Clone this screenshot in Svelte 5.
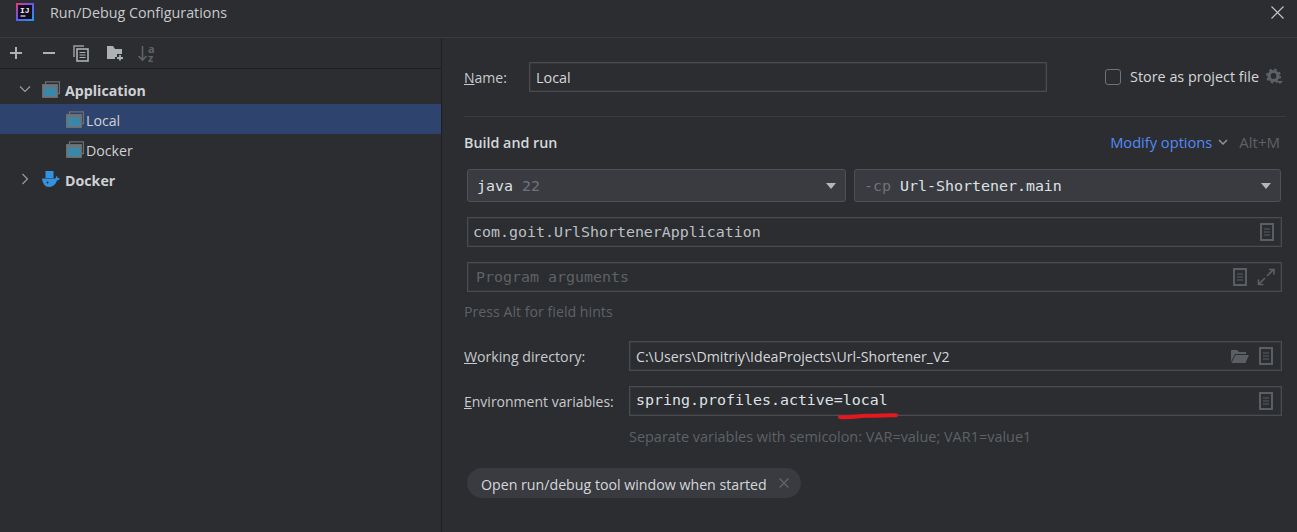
<script>
	const tree = [
		{ name: 'Application', bold: true, open: true, icon: 'app', indent: 'top' },
		{ name: 'Local', icon: 'app', indent: 'child', selected: true },
		{ name: 'Docker', icon: 'app', indent: 'child' },
		{ name: 'Docker', bold: true, open: false, icon: 'docker', indent: 'top' }
	]
</script>

{#snippet doc()}
	<svg class="ic" width="16" height="18" viewBox="0 0 16 18">
		<rect x="2" y="1" width="12" height="16" fill="none" stroke="#5a5f63" stroke-width="2" />
		<path d="M5 6h6M5 9h6M5 12h6" stroke="#5a5f63" stroke-width="1.2" />
	</svg>
{/snippet}

{#snippet appIcon()}
	<svg class="treeicon" width="18" height="17" viewBox="0 0 18 17">
		<path d="M3.500 3V.800h14V12.500H16" fill="none" stroke="#6b7074" stroke-width="1.300" />
		<rect x="1" y="4" width="14" height="12" fill="#3a87a8" stroke="#6e7478" stroke-width="1.800" />
		<rect x="1" y="4" width="14" height="2.500" fill="#6e7478" />
	</svg>
{/snippet}

<div class="dialog">
	<header class="titlebar">
		<svg class="logo" width="18" height="18" viewBox="0 0 18 18">
			<defs>
				<linearGradient id="lg" x1="0" y1="0" x2="1" y2="1">
					<stop offset="0" stop-color="#f0386b" />
					<stop offset="0.45" stop-color="#6a55f0" />
					<stop offset="1" stop-color="#1e9cf0" />
				</linearGradient>
			</defs>
			<rect width="18" height="18" fill="url(#lg)" />
			<rect x="2" y="2" width="14" height="14" fill="#120b1c" />
			<text x="4" y="10" class="ij">IJ</text>
			<path d="M4.500 13h5" stroke="#e8e8ee" stroke-width="1.200" />
		</svg>
		<span class="title">Run/Debug Configurations</span>
		<svg class="close" width="13" height="13" viewBox="0 0 13 13">
			<path d="M.500 .500l12 12M12.500 .500l-12 12" stroke="#c4c7cb" stroke-width="1.100" />
		</svg>
	</header>

	<div class="body">
		<aside class="left">
			<div class="toolbar">
				<svg class="add" width="14" height="14" viewBox="0 0 14 14"><path d="M7 1v12M1 7h12" stroke="#aeb1b4" stroke-width="2" /></svg>
				<svg class="remove" width="14" height="14" viewBox="0 0 14 14"><path d="M1 7h12" stroke="#aeb1b4" stroke-width="2" /></svg>
				<svg class="copy" width="16" height="17" viewBox="0 0 16 17">
					<path d="M11 1H1v11" fill="none" stroke="#9a9da0" stroke-width="1.500" />
					<rect x="4" y="4" width="11" height="12" fill="none" stroke="#aeb1b4" stroke-width="1.600" />
					<path d="M6.500 7.500h6M6.500 10h6M6.500 12.500h6" stroke="#aeb1b4" stroke-width="1.200" />
				</svg>
				<svg class="folder" width="19" height="16" viewBox="0 0 19 16">
					<path d="M1 1h6l2 3h7v5h-5v3H9v2H1z" fill="#aeb1b4" />
					<path d="M14 10v5.500M11 13h6" stroke="#aeb1b4" stroke-width="1.800" />
				</svg>
				<svg class="sort" width="18" height="17" viewBox="0 0 18 17">
					<path d="M5.500 1v14M1.500 11l4 4 4-4" fill="none" stroke="#5f6366" stroke-width="1.600" />
					<text x="11" y="7.500" class="az">a</text>
					<text x="11" y="16.500" class="az">z</text>
				</svg>
			</div>
			<div class="tree">
				{#each tree as row}
					<div class="row {row.indent}" class:selected={row.selected}>
						{#if row.indent === 'top'}
							<svg class="chev" width="12" height="12" viewBox="0 0 12 12">
								{#if row.open}
									<path d="M1 3.500l5 5 5-5" fill="none" stroke="#9da0a3" stroke-width="1.100" />
								{:else}
									<path d="M3.500 1l5 5-5 5" fill="none" stroke="#9da0a3" stroke-width="1.100" />
								{/if}
							</svg>
						{/if}
						{#if row.icon === 'app'}
							{@render appIcon()}
						{:else}
							<svg class="treeicon" width="18" height="16" viewBox="0 0 18 16">
								<rect x="3.500" y="0" width="8" height="7" fill="#3592e0" />
								<path d="M0 7.500h13.500q.5-2 1-2.500 1.200 .5 1.200 2 1.300-.3 2.300 .5-1 2-3 2-2 6.500-8 6.500-6 0-7-8.500z" fill="#3592e0" />
								<circle cx="5.500" cy="11.500" r="1" fill="#20252b" />
							</svg>
						{/if}
						<span class:bold={row.bold}>{row.name}</span>
					</div>
				{/each}
			</div>
		</aside>

		<main class="right">
			<div class="namerow">
				<label class="lbl name"><u>N</u>ame:</label>
				<div class="field namefield">Local</div>
				<div class="store">
					<span class="check"></span>
					<span class="storetext">Store as project file</span>
					<svg width="18" height="18" viewBox="0 0 18 18">
						<circle cx="8.500" cy="8" r="4.500" fill="none" stroke="#5e6266" stroke-width="3.200" />
						<circle cx="8.500" cy="8" r="6.500" fill="none" stroke="#5e6266" stroke-width="2" stroke-dasharray="2.500 2.600" />
						<path d="M12 13h6l-3 3z" fill="#5e6266" />
					</svg>
				</div>
			</div>

			<div class="divider"></div>

			<div class="buildhead">
				<strong>Build and run</strong>
				<span class="modify">Modify options</span>
				<svg width="10" height="7" viewBox="0 0 10 7"><path d="M1 1l4 4 4-4" fill="none" stroke="#8f9398" stroke-width="1.500" /></svg>
				<span class="shortcut">Alt+M</span>
			</div>

			<div class="combos">
				<div class="combo jdk">
					<span class="mono"><span class="kw">java</span> <span class="dim">22</span></span>
					<i class="arrow"></i>
				</div>
				<div class="combo cp">
					<span class="mono"><span class="dim">-cp</span> <span class="kw">Url-Shortener.main</span></span>
					<i class="arrow"></i>
				</div>
			</div>

			<div class="field wide mono mainclass">
				<span>com.goit.UrlShortenerApplication</span>
				<span class="icons">{@render doc()}</span>
			</div>

			<div class="field wide mono args">
				<span class="ph">Program arguments</span>
				<span class="icons">
					{@render doc()}
					<svg class="ic" width="18" height="18" viewBox="0 0 18 18">
						<path d="M10 8l6-6M12 1.500h5v5M8 10l-6 6M1.500 11.500v5h5" fill="none" stroke="#5a5f63" stroke-width="1.700" />
					</svg>
				</span>
			</div>

			<div class="hint first">Press Alt for field hints</div>

			<div class="formrow workdir">
				<label class="lbl"><u>W</u>orking directory:</label>
				<div class="field grow">
					<span>C:\Users\Dmitriy\IdeaProjects\Url-Shortener_V2</span>
					<span class="icons">
						<svg class="ic" width="19" height="15" viewBox="0 0 19 15">
							<path d="M1 13V1h6l2 2h7v2H5L1 13zM5.500 6H19l-3.500 8H1.500z" fill="#5a5f63" />
						</svg>
						{@render doc()}
					</span>
				</div>
			</div>

			<div class="formrow envvars">
				<label class="lbl"><u>E</u>nvironment variables:</label>
				<div class="field grow env">
					<span class="mono envtext">spring.profiles.active=local</span>
					<span class="icons">{@render doc()}</span>
					<svg class="scribble" width="60" height="8" viewBox="0 0 60 8">
						<path d="M2 5C12 6 22 3.500 30 3.800S50 3 58 3.300" fill="none" stroke="#e3191f" stroke-width="4" stroke-linecap="round" />
					</svg>
				</div>
			</div>

			<div class="hint sep">Separate variables with semicolon: VAR=value; VAR1=value1</div>

			<div class="pill">
				<span>Open run/debug tool window when started</span>
				<svg width="10" height="10" viewBox="0 0 10 10"><path d="M.500 .500l9 9M9.500 .500l-9 9" stroke="#63676b" stroke-width="1.200" /></svg>
			</div>
		</main>
	</div>
</div>

<style>
	:global(body) {
		background: #2b2d30;
	}

	.dialog {
		display: flex;
		flex-direction: column;

		height: 532px;
		overflow: hidden;

		background: #2b2d30;
		color: #d5d7da;

		font-family: "Open Sans", sans-serif;
		font-size: 14px;
	}

	.titlebar {
		display: flex;
		align-items: center;
		flex: none;

		height: 38px;
		padding: 0 13px 13px 16px;
		box-sizing: border-box;

		border-bottom: 1px solid #393b40;
	}

	.logo {
		margin-right: 16px;
		overflow: visible;
	}

	.ij {
		fill: #f2f2f6;
		font-family: "Liberation Mono", monospace;
		font-size: 8px;
		font-weight: 700;
	}

	.title {
		flex: 1;
		color: #c8cacd;
		font-size: 14.300px;
	}

	.body {
		display: flex;
		flex: 1;
		min-height: 0;
	}

	.left {
		flex: none;
		width: 441px;
		border-right: 1px solid #1e1f22;
	}

	.toolbar {
		display: flex;
		align-items: center;

		height: 31px;
		padding: 0 0 0 9px;
		box-sizing: border-box;

		border-bottom: 1px solid #1e1f22;
	}

	.remove {
		margin-left: 19px;
	}

	.copy {
		margin-left: 17px;
	}

	.folder {
		margin-left: 17px;
	}

	.sort {
		margin-left: 12px;
		overflow: visible;
	}

	.az {
		fill: #5f6366;
		font-size: 11px;
		font-weight: 700;
	}

	.tree {
		padding-top: 5px;
	}

	.row {
		display: flex;
		align-items: center;
		height: 30px;
		color: #cfd1d4;
		font-size: 14.200px;
	}

	.row span {
		padding-top: 2px;
	}

	.row.selected {
		background: #2e436e;
	}

	.row.top {
		padding-left: 19px;
	}

	.row.child {
		padding-left: 66px;
	}

	.chev {
		margin-right: 11px;
	}

	.treeicon {
		margin-right: 2px;
		flex: none;
	}

	.row.top .treeicon {
		margin-right: 5px;
	}

	.bold {
		font-weight: 700;
	}

	.right {
		flex: 1;
		min-width: 0;
		padding: 24px 15px 0 22px;
		box-sizing: border-box;
	}

	.lbl {
		display: block;
		flex: none;
		color: #c8cacd;
	}

	.namerow {
		display: flex;
		align-items: center;
		height: 30px;
	}

	.lbl.name {
		width: 65px;
	}

	.field {
		display: flex;
		align-items: center;
		justify-content: space-between;

		height: 30px;
		padding: 0 6px;
		box-sizing: border-box;

		border: 1px solid #494b50;
		box-shadow: inset 0 0 0 1px #34363a;
		background: #2b2d30;
		color: #d5d7da;
	}

	.namefield {
		flex: none;
		width: 518px;
		font-size: 14.400px;
	}

	.store {
		display: flex;
		align-items: center;
		margin-left: 58px;
		white-space: nowrap;
	}

	.check {
		width: 16px;
		height: 16px;
		margin-right: 9px;
		box-sizing: border-box;
		border: 1px solid #6f7377;
		border-radius: 3px;
	}

	.storetext {
		padding-bottom: 2px;
		font-size: 14.400px;
	}

	.store svg {
		margin-left: 6px;
	}

	.divider {
		height: 1px;
		margin-top: 24px;
		margin-right: -4px;
		background: #393b40;
	}

	.buildhead {
		display: flex;
		align-items: center;
		height: 20px;
		margin-top: 15px;
		margin-right: 2px;
	}

	.buildhead strong {
		flex: 1;
		font-size: 14.300px;
		font-weight: 600;
		color: #d5d7da;
	}

	.modify {
		color: #548af7;
		font-size: 14.650px;
	}

	.buildhead svg {
		margin: 0 11px 0 6px;
	}

	.shortcut {
		color: #5e6267;
		font-size: 15px;
	}

	.combos {
		display: flex;
		gap: 8px;
		margin: 17px 0 0 3px;
	}

	.combo {
		display: flex;
		align-items: center;
		justify-content: space-between;

		height: 33px;
		padding: 0 9px;
		box-sizing: border-box;

		border: 1px solid #4e5157;
		border-radius: 3px;
		background: #393b40;
	}

	.jdk {
		width: 379px;
	}

	.cp {
		width: 427px;
	}

	.arrow {
		width: 0;
		height: 0;
		border-left: 5.500px solid transparent;
		border-right: 5.500px solid transparent;
		border-top: 6px solid #b4b7ba;
	}

	.mono {
		font-family: "DejaVu Sans Mono", monospace;
		font-size: 14.950px;
		white-space: pre;
	}

	.kw {
		color: #dfe1e5;
	}

	.dim {
		color: #6f7377;
	}

	.wide {
		margin-left: 3px;
	}

	.mainclass {
		margin-top: 15px;
		padding-left: 5px;
		color: #bcc0c4;
	}

	.args {
		margin-top: 15px;
	}

	.ph {
		padding-left: 2px;
		color: #5e6267;
	}

	.icons {
		display: flex;
		align-items: center;
		gap: 9px;
		font-family: "Open Sans", sans-serif;
	}

	.ic {
		display: block;
		flex: none;
	}

	.hint {
		color: #5e6267;
		font-size: 14.450px;
		line-height: 20px;
	}

	.hint.first {
		margin-top: 10px;
		font-size: 14.200px;
	}

	.formrow {
		display: flex;
		align-items: center;
	}

	.formrow .lbl {
		width: 165px;
	}

	.formrow .field {
		padding-right: 7px;
	}

	.grow {
		flex: 1;
	}

	.workdir {
		margin-top: 19px;
		font-size: 14.150px;
	}

	.envvars {
		margin-top: 15px;
	}

	.env {
		position: relative;
	}

	.envtext {
		color: #dfe1e5;
		padding-bottom: 2px;
	}

	.scribble {
		position: absolute;
		left: 208px;
		top: 25px;
	}

	.sep {
		margin: 11px 0 0 165px;
	}

	.pill {
		display: inline-flex;
		align-items: center;
		gap: 12px;

		height: 30px;
		margin: 21px 0 0 3px;
		padding: 0 12px 0 14px;
		box-sizing: border-box;

		border-radius: 15px;
		background: #393b40;
		color: #d5d7da;
		font-size: 14.200px;
	}

	.pill span {
		padding-top: 2px;
	}
</style>
